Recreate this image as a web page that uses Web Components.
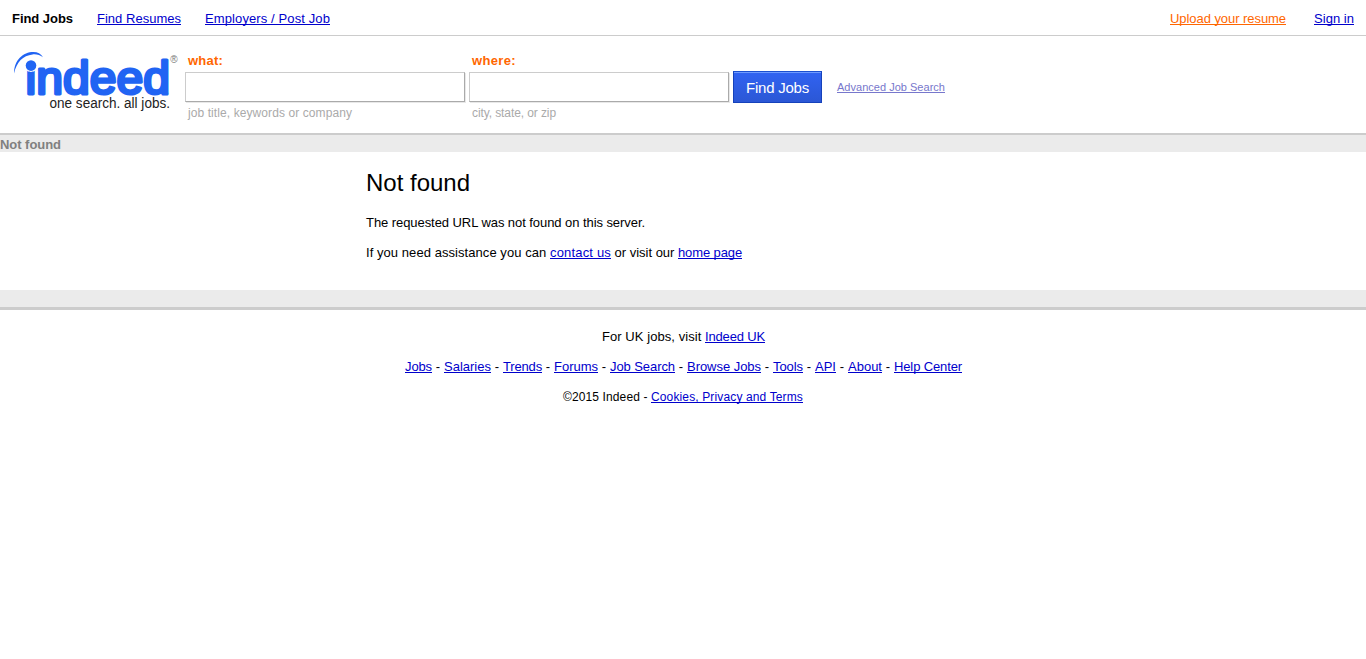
<!DOCTYPE html>
<html lang="en"><head><meta charset="utf-8"><title>Not found</title>
<style>body{margin:0;background:#fff;color:#000;font:13px/15px "Liberation Sans",Arial,sans-serif}</style></head>
<body><job-page></job-page>
<script>
const define=(name,css,html)=>customElements.define(name,class extends HTMLElement{
  constructor(){super();this.attachShadow({mode:'open'}).innerHTML=`<style>${css}</style>${html}`;}
});
// Text run whose tracking is set so that it fills the width in its "w" attribute.
customElements.define('text-run',class extends HTMLElement{
  constructor(){super();this.attachShadow({mode:'open'}).innerHTML='<style>:host{display:inline-block;white-space:pre;text-decoration:inherit;text-decoration-skip-ink:none}</style><slot></slot>';}
  connectedCallback(){
    const w=parseFloat(this.getAttribute('w')),n=this.textContent.length;
    if(!w||!n)return;
    const natural=this.getBoundingClientRect().width;
    this.style.letterSpacing=((w-natural)/n)+'px';
  }
});
const link='a{color:#0000cc;text-decoration:underline}';
define('top-nav',`:host{display:flex;justify-content:space-between;height:35px;border-bottom:1px solid #ccc;padding:0 12px}
nav{display:flex;padding-top:11px}.l{gap:24px}.r{gap:28px}${link}a.up{color:#f60}b{font-weight:bold}`,
`<nav class="l"><b><text-run w="61">Find Jobs</text-run></b><a><text-run w="84">Find Resumes</text-run></a><a><text-run w="125">Employers / Post Job</text-run></a></nav>
<nav class="r"><a class="up"><text-run w="116">Upload your resume</text-run></a><a><text-run w="40">Sign in</text-run></a></nav>`);
define('site-logo',`:host{display:block;width:171px;height:66px}svg{display:block;overflow:visible}`,
`<svg width="171" height="66" viewBox="10 48 171 66" font-family="Liberation Sans, Arial, sans-serif">
<defs><clipPath id="c"><path d="M24 69.5H25.8A6.6 6.6 0 0 0 36.2 69.5H37.8V50H175V100H24Z"/></clipPath></defs>
<g clip-path="url(#c)"><text x="25.6" y="93.6" font-size="47" textLength="144.5" lengthAdjust="spacingAndGlyphs" fill="#2164f3" stroke="#2164f3" stroke-width="3.1" stroke-linejoin="round">indeed</text></g>
<circle cx="31" cy="65.6" r="5.3" fill="#2164f3"/>
<path d="M14 73.5C14 60 23 52 33.5 52C37.5 52 41 53.7 43 57.3C40 54.9 36.5 54 32.5 54.4C23 55.4 16.5 62 14 73.5Z" fill="#2164f3"/>
<text x="49.5" y="107.8" font-size="14" textLength="120.5" lengthAdjust="spacingAndGlyphs" fill="#222">one search. all jobs.</text>
<text x="170.3" y="63" font-size="10" fill="#777">®</text></svg>`);
define('search-field',`:host{display:block;padding-top:5px}
label{display:block;font-weight:bold;color:#f60;padding:0 3px;height:19px;line-height:15px}
input{display:block;box-sizing:border-box;width:100%;height:30px;margin:0;padding:4px;border:1px solid #ccc;border-right:1px solid #aaa;border-bottom:1px solid #aaa;border-radius:0;background:#fff;box-shadow:1px 1px 0 #e8e8e8;outline:0}
p{margin:4px 3px 0;color:#aaa;font-size:12px;line-height:15px}`,
`<label><slot name="label"></slot></label><input><p><slot name="hint"></slot></p>`);
define('find-button',`:host{display:block}button{display:block;box-sizing:border-box;width:89px;height:32px;padding:2px 0 0;border:1px solid #1642bb;border-top-color:#1b4fd0;background:linear-gradient(#3163f2,#2b57d5);box-shadow:inset 0 1px 0 #6f9bff;color:#fff;font:15px/18px "Liberation Sans",Arial,sans-serif}`,
`<button><text-run w="63">Find Jobs</text-run></button>`);
define('search-bar',`:host{display:flex;height:97px;border-bottom:2px solid #ccc;padding-left:10px;align-items:flex-start}
site-logo{margin:12px 4px 0 0}search-field{margin:12px 4px 0 0}.a{width:280px}.b{width:260px}find-button{margin-top:35px}
a{margin:44px 0 0 15px;font-size:11px;line-height:15px;color:#77c;text-decoration:underline}`,
`<site-logo></site-logo>
<search-field class="a"><text-run slot="label" w="35">what:</text-run><text-run slot="hint" w="164">job title, keywords or company</text-run></search-field>
<search-field class="b"><text-run slot="label" w="44">where:</text-run><text-run slot="hint" w="84">city, state, or zip</text-run></search-field>
<find-button></find-button><a><text-run w="108">Advanced Job Search</text-run></a>`);
define('error-body',`:host{display:block}header{height:17px;background:#ebebeb;color:gray;font-weight:bold;line-height:20px}
main{height:138px;padding-left:366px}h1{margin:0;padding-top:16px;font-size:24px;font-weight:normal;line-height:30px}
p{margin:0;line-height:15px;padding-top:17px;white-space:pre}p+p{padding-top:15px}.band{height:17px;background:#ebebeb;border-bottom:3px solid #ccc}${link}`,
`<header><text-run w="61">Not found</text-run></header><main><h1><text-run w="104">Not found</text-run></h1>
<p><text-run w="279">The requested URL was not found on this server.</text-run></p><p><text-run w="184">If you need assistance you can </text-run><a><text-run w="61">contact us</text-run></a><text-run w="67"> or visit our </text-run><a><text-run w="64">home page</text-run></a></p></main><div class="band"></div>`);
const items=[['Jobs',27],['Salaries',47],['Trends',39],['Forums',44],['Job Search',65],['Browse Jobs',74],['Tools',30],['API',21],['About',34],['Help Center',68]];
define('site-footer',`:host{display:flex;flex-direction:column;align-items:center;gap:15px;padding:19px 0 0 1px}p{margin:0;white-space:pre;height:15px}.s{font-size:12px;line-height:17px;padding-right:1px}${link}`,
`<p><text-run w="103">For UK jobs, visit </text-run><a><text-run w="60">Indeed UK</text-run></a></p><p>${items.map(([t,w])=>`<a><text-run w="${w}">${t}</text-run></a>`).join('<text-run w="12"> - </text-run>')}</p>
<p class="s"><text-run w="88">©2015 Indeed - </text-run><a><text-run w="152">Cookies, Privacy and Terms</text-run></a></p>`);
define('job-page',':host{display:block}','<top-nav></top-nav><search-bar></search-bar><error-body></error-body><site-footer></site-footer>');
</script></body></html>
